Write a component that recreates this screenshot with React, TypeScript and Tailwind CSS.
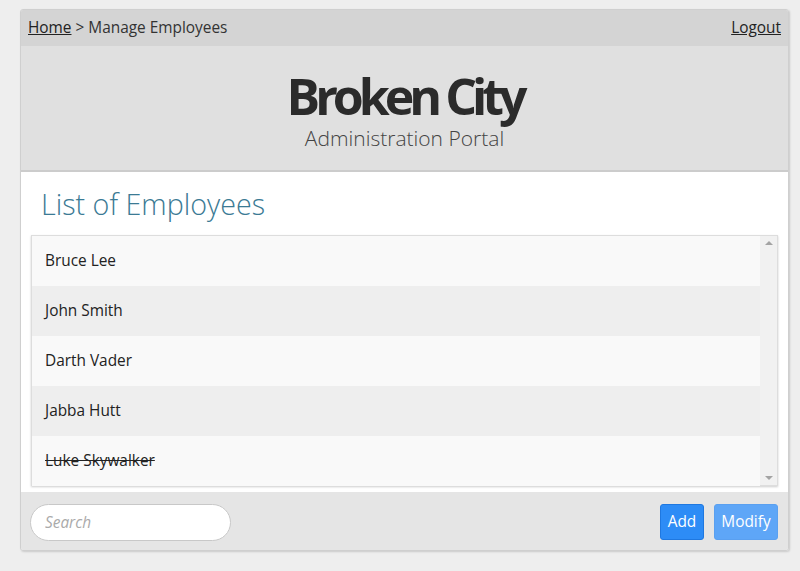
import { useState } from 'react';

const employees = [
  { id: 1, name: 'Bruce Lee', removed: false },
  { id: 2, name: 'John Smith', removed: false },
  { id: 3, name: 'Darth Vader', removed: false },
  { id: 4, name: 'Jabba Hutt', removed: false },
  { id: 5, name: 'Luke Skywalker', removed: true },
];

export default function App() {
  const [query, setQuery] = useState('');

  return (
    <div className="min-h-[571px] bg-[#eeeeee] pt-[9px] pl-[20px] font-['Open_Sans',sans-serif] text-[#333]">
      <div className="w-[769px] overflow-hidden rounded-[3px] border border-[#cfcfcf] shadow-[1px_1px_2px_rgba(0,0,0,0.15)]">
        <div className="flex h-[36px] items-center justify-between bg-[#d4d4d4] px-[7px] text-[15.4px]">
          <div>
            <a href="#" className="text-[#222] underline">Home</a> &gt; Manage Employees
          </div>
          <a href="#" className="text-[#222] underline">Logout</a>
        </div>

        <div className="flex h-[126px] flex-col items-center border-b-2 border-[#cccccc] bg-[#e0e0e0] pt-[25px]">
          <h1 className="text-[50px] font-bold leading-[50px] tracking-[-5px] text-[#2b2b2b]">Broken City</h1>
          <p className="mt-[3px] text-[21px] font-light leading-[28px] text-[#444]">Administration Portal</p>
        </div>

        <div className="bg-white px-[10px] pt-[13px] pb-[6px]">
          <h2 className="pl-[10px] text-[28.7px] font-light leading-[38px] text-[#3b7a94]">List of Employees</h2>
          <div className="mt-[12px] flex h-[251px] border border-[#dddddd] shadow-[0_1px_2px_rgba(0,0,0,0.2)]">
            <ul className="flex-1">
              {employees.map((e, i) => (
                <li
                  key={e.id}
                  className={`flex h-[50px] items-center px-[13px] text-[15.4px] text-[#222] ${i % 2 ? 'bg-[#eeeeee]' : 'bg-[#f9f9f9]'}`}
                >
                  <span className={e.removed ? 'line-through' : ''}>{e.name}</span>
                </li>
              ))}
            </ul>
            <div className="flex w-[17px] flex-col items-center justify-between bg-[#f1f1f1] py-[5px]">
              <div className="h-0 w-0 border-x-[4px] border-b-[4px] border-x-transparent border-b-[#a3a3a3]" />
              <div className="h-0 w-0 border-x-[4px] border-t-[4px] border-x-transparent border-t-[#a3a3a3]" />
            </div>
          </div>
        </div>

        <div className="flex h-[58px] items-center justify-between bg-[#e5e5e5] pl-[9px] pr-[10px] pt-[2px]">
          <input
            value={query}
            onChange={(e) => setQuery(e.target.value)}
            placeholder="Search"
            className="h-[37px] w-[201px] rounded-full border border-[#c8c8c8] bg-white px-[14px] text-[15.4px] outline-none placeholder:italic placeholder:text-[#aaa]"
          />
          <div className="flex gap-[10px]">
            <button className="h-[36px] w-[44px] rounded-[3px] border border-[#1f78e0] bg-[#2d8cf6] text-[15.4px] text-white">Add</button>
            <button className="h-[36px] w-[64px] rounded-[3px] border border-[#5aa0f0] bg-[#5ea6f7] text-[15.4px] text-white">Modify</button>
          </div>
        </div>
      </div>
    </div>
  );
}
